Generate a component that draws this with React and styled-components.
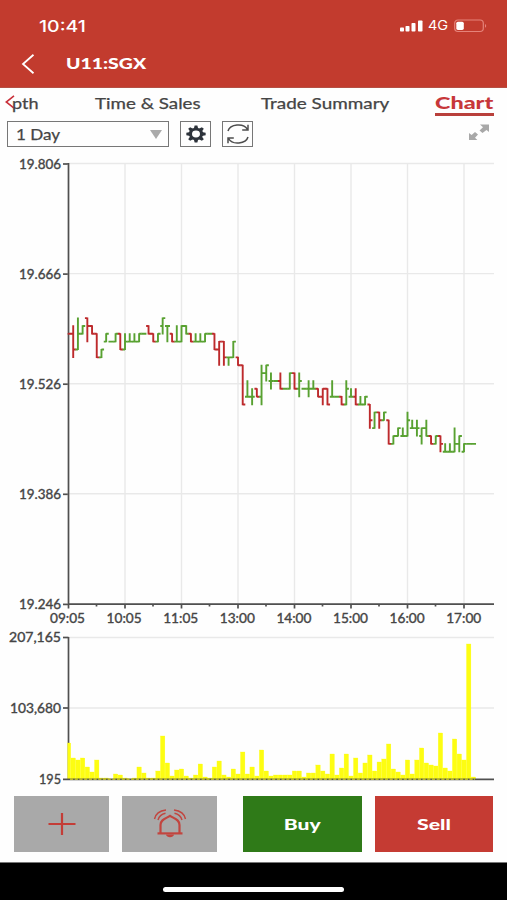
import React from 'react'
import styled, { createGlobalStyle } from 'styled-components'

// prices in cents above 19.00: [direction, open, high, low, close]
const prices = [
    ['d', 59, 59, 59, 59], ['d', 59, 60, 56, 57], ['u', 57, 61, 57, 59], ['u', 59, 60, 59, 60],
    ['d', 61, 61, 58, 60], ['d', 60, 60, 59, 59], ['d', 59, 59, 56, 56], ['u', 56, 57, 56, 57],
    ['u', 58, 59, 58, 59], ['u', 58, 58, 58, 58], ['u', 58, 59, 58, 59], ['d', 59, 59, 57, 57],
    ['u', 57, 59, 57, 58], ['u', 58, 59, 58, 58], ['u', 58, 59, 58, 58], ['u', 58, 59, 58, 59],
    ['u', 59, 59, 59, 59], ['d', 60, 60, 59, 59], ['d', 59, 59, 58, 58], ['u', 58, 59, 58, 59],
    ['u', 60, 61, 59, 61], ['u', 60, 60, 58, 60], ['d', 59, 59, 58, 58], ['u', 58, 60, 58, 58],
    ['u', 58, 60, 58, 60], ['u', 60, 60, 59, 59], ['d', 59, 59, 58, 58], ['u', 58, 59, 58, 58],
    ['u', 58, 59, 58, 58], ['u', 58, 59, 58, 59], ['u', 59, 59, 59, 59], ['d', 59, 59, 57, 57],
    ['d', 57, 58, 55, 58], ['d', 58, 58, 55, 56], ['u', 56, 56, 55, 56], ['u', 56, 58, 56, 58],
    ['d', 56, 56, 55, 55], ['d', 55, 55, 50, 50], ['u', 51, 53, 51, 51], ['u', 51, 52, 50, 51],
    ['d', 52, 52, 51, 51], ['u', 51, 55, 50, 54], ['u', 54, 55, 53, 55], ['u', 53, 54, 52, 53],
    ['u', 53, 53, 53, 53], ['d', 53, 54, 52, 52], ['u', 52, 52, 52, 52], ['u', 52, 54, 52, 54],
    ['d', 54, 54, 52, 52], ['u', 52, 54, 51, 53], ['u', 52, 52, 52, 52], ['u', 52, 53, 51, 52],
    ['u', 52, 53, 52, 52], ['d', 52, 52, 51, 51], ['d', 51, 52, 50, 52], ['d', 52, 52, 50, 50],
    ['u', 51, 53, 51, 51], ['u', 51, 51, 51, 51], ['d', 51, 51, 50, 50], ['u', 50, 53, 50, 52],
    ['u', 51, 52, 51, 51], ['d', 51, 52, 50, 50], ['u', 50, 51, 50, 50], ['u', 50, 51, 50, 51],
    ['d', 50, 50, 47, 48], ['u', 47, 49, 47, 49], ['d', 49, 49, 47, 48], ['u', 48, 49, 48, 49],
    ['d', 48, 48, 45, 45], ['u', 45, 46, 45, 46], ['u', 46, 47, 46, 47], ['u', 46, 47, 46, 46],
    ['u', 46, 49, 46, 48], ['u', 47, 48, 47, 47], ['u', 47, 48, 46, 47], ['u', 46, 47, 45, 47],
    ['u', 47, 48, 46, 46], ['d', 46, 46, 45, 45], ['u', 45, 46, 45, 46], ['d', 46, 46, 44, 45],
    ['u', 44, 45, 44, 44], ['u', 44, 45, 44, 44], ['u', 44, 47, 44, 45], ['u', 45, 46, 44, 46],
    ['u', 44, 45, 44, 45], ['u', 45, 45, 45, 45], ['u', 45, 45, 45, 45],
]

const volumes = [
    36, 21, 19, 21, 12, 7, 19, 1, 1, 0, 5, 4, 1, 0, 1, 12, 6, 1, 1, 8, 43, 16, 3, 9, 10, 3, 1, 4, 15, 2,
    1, 12, 18, 4, 2, 10, 5, 27, 5, 12, 3, 29, 8, 3, 4, 4, 4, 4, 8, 8, 2, 6, 6, 14, 8, 5, 25, 4, 11, 25,
    3, 21, 6, 16, 24, 8, 17, 20, 35, 10, 7, 4, 19, 5, 19, 31, 16, 14, 13, 46, 11, 8, 40, 25, 19, 135, 2,
]

const times = ['09:05', '10:05', '11:05', '13:00', '14:00', '15:00', '16:00', '17:00']
const levels = ['19.806', '19.666', '19.526', '19.386', '19.246']

const LEFT = 68.5
const STEP = 56.5 / 12
const barX = i => LEFT + i * STEP
const priceY = p => 14 + (80.6 - p) * 7.861

const PriceChart = () => (
    <Plot width="507" height="478" viewBox="0 0 507 478">
        {levels.map((level, i) => (
            <React.Fragment key={level}>
                <GridLine x1={LEFT} x2="494" y1={13.5 + i * 110.1} y2={13.5 + i * 110.1} />
                <Axis x1="63" x2={LEFT} y1={14 + i * 110.1} y2={14 + i * 110.1} />
                <AxisText x="19" y={18.5 + i * 110.1} textLength="42" lengthAdjust="spacingAndGlyphs">{level}</AxisText>
            </React.Fragment>
        ))}
        {times.map((time, i) => (
            <React.Fragment key={time}>
                <GridLine x1={LEFT + i * 56.5} x2={LEFT + i * 56.5} y1="14" y2="454" />
                <Axis x1={LEFT + i * 56.5} x2={LEFT + i * 56.5} y1="454" y2="458.5" />
                {i < 7 && <Axis x1={LEFT + 28 + i * 56.5} x2={LEFT + 28 + i * 56.5} y1="454" y2="456.5" />}
                <AxisText x={50 + i * 56.6} y="472.7" textLength="35" lengthAdjust="spacingAndGlyphs">{time}</AxisText>
            </React.Fragment>
        ))}
        <Axis x1={LEFT} x2={LEFT} y1="13" y2="454" />
        <Axis x1={LEFT} x2="494" y1="454.2" y2="454.2" />
        {prices.map(([dir, open, high, low, close], i) => (
            <Bar
                key={i}
                $dir={dir}
                d={`M${barX(i) - (i ? 2.4 : 0)} ${priceY(open)}H${barX(i)}M${barX(i)} ${priceY(high) - 0.6}V${priceY(low) + 0.6}M${barX(i)} ${priceY(close)}H${barX(i) + 2.6}`}
            />
        ))}
    </Plot>
)

const VolumeChart = () => (
    <Plot width="507" height="160" viewBox="0 0 507 160">
        <GridLine x1={LEFT} x2="494" y1="9.5" y2="9.5" />
        <GridLine x1={LEFT} x2="494" y1="80" y2="80" />
        <Axis x1={LEFT} x2={LEFT} y1="9" y2="152" />
        <Axis x1="63" x2={LEFT} y1="9.5" y2="9.5" />
        <Axis x1="63" x2={LEFT} y1="80" y2="80" />
        {volumes.map((v, i) => (
            <Volume key={i} x={i ? barX(i) - 2.2 : LEFT - 0.8} y={151 - v} width={i ? 4.4 : 3} height={v} />
        ))}
        <Axis x1="63" x2="494" y1="151.4" y2="151.4" />
        <Dashes x1="70" x2="475" y1="151.2" y2="151.2" />
        <AxisText x="9" y="14" textLength="52" lengthAdjust="spacingAndGlyphs">207,165</AxisText>
        <AxisText x="10" y="84.5" textLength="51" lengthAdjust="spacingAndGlyphs">103,680</AxisText>
        <AxisText x="39" y="156" textLength="22" lengthAdjust="spacingAndGlyphs">195</AxisText>
    </Plot>
)

const GearIcon = () => (
    <svg width="20" height="18" viewBox="0 0 20 18">
        <g transform="translate(10 9) scale(1.05 0.92)" fill="#2d333b">
            {[0, 45, 90, 135, 180, 225, 270, 315].map(a => (
                <path key={a} d="M-2.2 -5.5L-1.3 -9.2H1.3L2.2 -5.5Z" transform={`rotate(${a})`} />
            ))}
            <circle r="5.3" fill="none" stroke="#2d333b" strokeWidth="3" />
        </g>
    </svg>
)

const RefreshIcon = () => (
    <svg width="24" height="22" viewBox="0 0 24 22" fill="none" stroke="#4d4d4d" strokeWidth="1.5">
        <path d="M2 8C4 1.2 17.5 -0.5 21.5 6.5M22 1.8V7H16.2" />
        <path d="M22 14C20 20.8 6.5 22.5 2.5 15.5M2 20.2V15H7.8" />
    </svg>
)

const ExpandIcon = () => (
    <svg width="22" height="19" viewBox="0 0 22 19" fill="#a8a8a8">
        <path d="M12 1.5H21V9L18.5 7L14.5 10L11.5 7.4L15 4.2Z" />
        <path d="M1 10L3.6 12L7 9L10 11.6L7 14.8L9.4 17H1Z" />
    </svg>
)

const BellIcon = () => (
    <svg width="34" height="30" viewBox="0 0 34 30" fill="none" stroke="#c2453f" strokeWidth="2.2">
        <path d="M7.5 24V16C7.5 10.5 13 9.5 17 6.8C21 9.5 26.5 10.5 26.5 16V24" />
        <path d="M4.5 24.4H29.5" strokeWidth="2.2" />
        <path d="M13 25.5H21C20.5 29.2 13.5 29.2 13 25.5Z" fill="#c2453f" stroke="none" />
        <path d="M1.5 10C2.5 5 6.5 1.8 13 1M5 11C6 7.2 8.5 5.2 12.5 4.3M32.5 10C31.5 5 27.5 1.8 21 1M29 11C28 7.2 25.5 5.2 21.5 4.3" strokeWidth="1.4" />
    </svg>
)

const App = () => {
    return (
        <Screen>
            <GlobalStyle />
            <Header>
                <StatusBar>
                    <Clock>10:41</Clock>
                    <StatusIcons>
                        <svg width="24" height="12" viewBox="0 0 24 12" fill="#fff">
                            <rect x="0" y="7.5" width="4" height="4" rx="0.8" />
                            <rect x="5.5" y="6" width="4" height="5.5" rx="0.8" />
                            <rect x="11.5" y="3" width="4" height="8.5" rx="0.8" />
                            <rect x="18" y="0.5" width="4.5" height="11" rx="0.8" />
                        </svg>
                        <Network>4G</Network>
                        <svg width="33" height="14" viewBox="0 0 33 14">
                            <rect x="0.7" y="1" width="28.6" height="11.5" rx="3.2" fill="none" stroke="#e5837a" strokeWidth="1.2" />
                            <rect x="2.3" y="2.7" width="7.5" height="8.2" rx="1.6" fill="#fff" />
                            <path d="M31 5V8.8C32.6 8 32.6 5.8 31 5Z" fill="#e5837a" />
                        </svg>
                    </StatusIcons>
                </StatusBar>
                <TitleBar>
                    <svg width="14" height="20" viewBox="0 0 14 20" fill="none" stroke="#fff" strokeWidth="1.8">
                        <path d="M12.5 0.8L2 10L12.5 19.2" />
                    </svg>
                    <Title>U11:SGX</Title>
                </TitleBar>
            </Header>
            <Tabs>
                <BackTab>
                    <svg width="10" height="14" viewBox="0 0 10 14" fill="none" stroke="#c9303a" strokeWidth="1.6">
                        <path d="M9 0.8L1.2 7L9 13.2" />
                    </svg>
                    <Stretch $x={1.2}>pth</Stretch>
                </BackTab>
                <Tab $width={166}><Stretch $x={1.25}>Time &amp; Sales</Stretch></Tab>
                <Tab $width={174}><Stretch $x={1.26}>Trade Summary</Stretch></Tab>
                <ActiveTab><Stretch $x={1.46}>Chart</Stretch></ActiveTab>
            </Tabs>
            <Toolbar>
                <Select>
                    <Stretch $x={1.14}>1 Day</Stretch>
                    <svg width="12" height="9" viewBox="0 0 12 9"><path d="M0 0H12L6 9Z" fill="#aaa" /></svg>
                </Select>
                <ToolButton $gap={11} aria-label="Settings"><GearIcon /></ToolButton>
                <ToolButton $gap={11} aria-label="Refresh"><RefreshIcon /></ToolButton>
                <Expand><ExpandIcon /></Expand>
            </Toolbar>
            <PriceChart />
            <VolumeChart />
            <Actions>
                <Action $width={95} $bg="#a9a9a9">
                    <svg width="28" height="24" viewBox="0 0 28 24" stroke="#c43d37" strokeWidth="2.2">
                        <path d="M0.5 12H27.5M14 1V23" />
                    </svg>
                </Action>
                <Action $width={95} $gap={13} $bg="#a9a9a9"><BellIcon /></Action>
                <Action $width={119} $gap={26} $bg="#2f7a18"><Stretch $x={1.4}>Buy</Stretch></Action>
                <Action $width={118} $gap={13} $bg="#c53b33"><Stretch $x={1.42}>Sell</Stretch></Action>
            </Actions>
            <HomeArea><HomeBar /></HomeArea>
        </Screen>
    )
}

export default App

const GlobalStyle = createGlobalStyle`
    * {
        box-sizing: border-box;
    }

    body {
        margin: 0;
        background: #fefefe;
        font-family: Lato, "Liberation Sans", sans-serif;
    }
`

const Screen = styled.div`
    width: 507px;
    height: 900px;
    display: flex;
    flex-direction: column;
    overflow: hidden;
    background: #fefefe;
    color: #454545;
`

const Stretch = styled.span`
    display: inline-block;
    white-space: nowrap;
    transform: scaleX(${({ $x }) => $x});
    transform-origin: left center;
`

const Header = styled.header`
    height: 88px;
    flex: none;
    background: #c23b2e;
    border-bottom: 1px solid #b55044;
    color: #fff;
`

const StatusBar = styled.div`
    height: 50px;
    padding: 1px 20px 0 39px;
    display: flex;
    align-items: center;
    justify-content: space-between;
`

const Clock = styled.span`
    font: 500 16.5px/20px Inter, sans-serif;
    transform: scaleX(1.18);
    transform-origin: left center;
`

const StatusIcons = styled.div`
    display: flex;
    align-items: center;
`

const Network = styled.span`
    width: 30px;
    padding-left: 4px;
    font: 400 12.5px/14px Inter, sans-serif;
    transform: scaleX(1.16);
    transform-origin: 4px center;
`

const TitleBar = styled.div`
    display: flex;
    align-items: center;
    height: 28px;
    padding-left: 21px;
`

const Title = styled.h1`
    margin: -1px 0 0 31px;
    font-size: 14.5px;
    font-weight: 900;
    line-height: 18px;
    transform: scaleX(1.34);
    transform-origin: left center;
`

const Tabs = styled.nav`
    display: flex;
    height: 33px;
    flex: none;
    font-size: 15px;
    line-height: 30px;
    -webkit-text-stroke: 0.25px #454545;
`

const BackTab = styled.div`
    display: flex;
    width: 95px;
    padding-left: 5px;

    svg {
        flex: none;
        margin-top: 7px;
        margin-right: -3px;
    }
`

const Tab = styled.div`
    width: ${({ $width }) => $width}px;
`

const ActiveTab = styled.div`
    width: 59px;
    height: 28px;
    border-bottom: 3px solid #b9403b;
    color: #c7373a;
    font-weight: 900;
    font-size: 16px;
    -webkit-text-stroke: 0;
`

const Toolbar = styled.div`
    display: flex;
    height: 29px;
    flex: none;
    padding: 0 17px 0 7px;
`

const Select = styled.div`
    width: 162px;
    height: 26px;
    display: flex;
    align-items: center;
    justify-content: space-between;
    padding: 0 6px 0 8px;
    border: 1.5px solid #777;
    font-size: 15px;
    -webkit-text-stroke: 0.25px #454545;
`

const ToolButton = styled.button`
    width: 31px;
    height: 26px;
    margin-left: ${({ $gap }) => $gap}px;
    padding: 0;
    display: flex;
    align-items: center;
    justify-content: center;
    background: none;
    border: 1.5px solid #777;

    svg {
        flex: none;
    }
`

const Expand = styled.div`
    margin: 2px 0 0 auto;
`

const Plot = styled.svg`
    display: block;
    flex: none;
`

const GridLine = styled.line`
    stroke: #e9e9e9;
    stroke-width: 1.4;
`

const Axis = styled.line`
    stroke: #505050;
    stroke-width: 1.7;
`

const Dashes = styled.line`
    stroke: #d9d91c;
    stroke-width: 1.2;
    stroke-dasharray: 3.2 1.5;
`

const AxisText = styled.text`
    fill: #454545;
    font-size: 12.5px;
    stroke: #454545;
    stroke-width: 0.35;
`

const Bar = styled.path`
    fill: none;
    stroke: ${({ $dir }) => ($dir === 'u' ? '#58a131' : '#bd2a2c')};
    stroke-width: 1.9;
`

const Volume = styled.rect`
    fill: #fdfd12;
    stroke: #fdfd12;
    stroke-width: 0.3;
`

const Actions = styled.div`
    display: flex;
    height: 74px;
    flex: none;
    padding: 8px 0 0 14px;
`

const Action = styled.button`
    width: ${({ $width }) => $width}px;
    height: 56px;
    margin-left: ${({ $gap }) => $gap || 0}px;
    padding: 0;
    border: 0;
    display: flex;
    align-items: center;
    justify-content: center;
    background: ${({ $bg }) => $bg};
    color: #fff;
    font: 900 15px/20px Lato, sans-serif;

    span {
        transform-origin: center;
    }
`

const HomeArea = styled.div`
    flex: 1;
    display: flex;
    justify-content: center;
    background: #000;
    border-top: 1px solid #777;
`

const HomeBar = styled.div`
    width: 181px;
    height: 5px;
    margin-top: 24px;
    border-radius: 3px;
    background: #fff;
`
